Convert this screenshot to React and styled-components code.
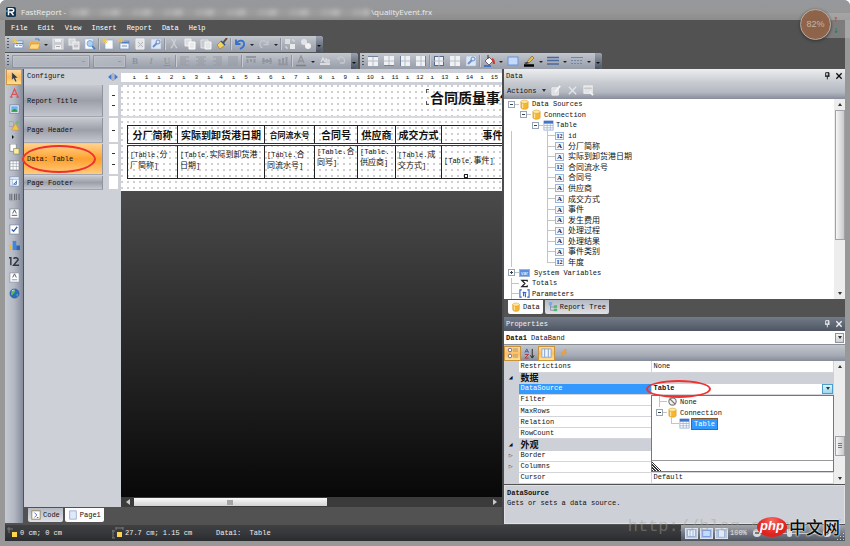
import React from "react"
import styled, { createGlobalStyle, css } from "styled-components"

const mono = `"Liberation Mono", "Noto Sans CJK SC", monospace`

const icons = {
  newReport: <><rect x="2" y="3" width="9" height="7" fill="#fff" stroke="#7f9ccb" /><path d="M2 5.500h9" stroke="#5d86c8" strokeWidth="1.500" /><path d="M4 7.500h2M7 7.500h3" stroke="#8fa9d6" /><path d="M0 3h6M3 0v6M1 1l4 4M5 1l-4 4" stroke="#f5c747" /></>,
  open: <><path d="M1 3h4l1 1h5v7H1z" fill="#eab24d" /><path d="M3 6h9l-2 5H1z" fill="#ffd985" stroke="#c28a2b" strokeWidth=".5" /><path d="M7 1h4v2" stroke="#4f80c8" fill="none" /></>,
  save: <><rect x="1" y="1" width="10" height="10" fill="#c9ccd1" stroke="#e5e7ea" /><path d="M3 1v3h6V1M3 11V7h6v4" fill="#f1f1f2" /><path d="M4 8.500h4" stroke="#aaa" /></>,
  saveAll: <><rect x="1" y="1" width="6" height="6" fill="#d3d5d9" stroke="#eee" /><rect x="5" y="4" width="6" height="7" fill="#d9dbdf" stroke="#f2f2f2" /><path d="M6 8h4" stroke="#aaa" /></>,
  preview: <><path d="M1 1h8v10H1z" fill="#fff" stroke="#9fb3cf" strokeWidth=".6" /><circle cx="6" cy="5.500" r="3" fill="#a9d2f5" stroke="#7aabdd" /><path d="M8 8l3 3" stroke="#3e78c0" strokeWidth="1.600" /></>,
  newPage: <><path d="M3 2h8v9H3z" fill="#fff" stroke="#8fa8cc" strokeWidth=".7" /><path d="M0 3h6M3 0v6M1 1l4 4M5 1l-4 4" stroke="#f5c747" /></>,
  dialog: <><rect x="2" y="3" width="9" height="8" fill="#eef3fb" stroke="#6d8fc4" strokeWidth=".7" /><path d="M2 4.500h9" stroke="#4d7cc5" strokeWidth="2" /><path d="M4 8h5" stroke="#79a" /><path d="M0 3h6M3 0v6" stroke="#f5c747" /></>,
  delPage: <><path d="M2 1h8v10H2z" fill="#e3e4e7" stroke="#f2f2f2" /><path d="M4 4l5 5M9 4L4 9" stroke="#b3b6bb" /></>,
  setup: <><path d="M1 1h10v10H1z" fill="#dfe7f4" stroke="#a9b8d2" strokeWidth=".6" /><path d="M3 9l4-4" stroke="#6d90c9" strokeWidth="2" /><circle cx="8" cy="4" r="2" fill="none" stroke="#6d90c9" /></>,
  cut: <path d="M4 1l4 8M8 1L4 9M3 9l1 1M8 9l1 1" stroke="#cfd2d6" fill="none" strokeWidth="1.200" />,
  copy: <><path d="M1 1h6v7H1z" fill="#dcdee1" stroke="#f0f0f0" /><path d="M5 4h6v7H5z" fill="#e9eaec" stroke="#fff" /></>,
  paste: <><path d="M1 2h7v8H1z" fill="#c6c9cd" stroke="#e2e3e5" /><path d="M5 4h6v7H5z" fill="#e4e5e8" stroke="#f8f8f8" /></>,
  brush: <><path d="M11 0L7 5" stroke="#5e4c38" strokeWidth="2" /><path d="M5 3l4 4-5 4-3-4z" fill="#f4d35b" stroke="#8b7430" strokeWidth=".6" /><path d="M5 3l4 4" stroke="#2f4f86" strokeWidth="1.500" /></>,
  undo: <path d="M2 1.500v4.500h4.500M2 6c3-5 9-4 8 1-.4 2-2 3-4 4" stroke="#3572cf" strokeWidth="1.800" fill="none" />,
  redo: <path d="M10 2v4.500H5.500M10 6C7 1 1 2 2 7c.4 1 1 2 2 3" stroke="#c3c6cc" strokeWidth="1.400" fill="none" />,
  group: <><rect x="1" y="1" width="5" height="5" fill="#dcdddf" /><rect x="6" y="6" width="5" height="5" fill="#e8e9ea" /><path d="M8 2h2v2M4 10H2V8" stroke="#ddd" fill="none" /></>,
  ungroup: <><circle cx="4" cy="4" r="3" fill="#e2e3e5" /><circle cx="8" cy="8" r="3" fill="#f2f2f2" /></>,
  alignL: <path d="M1 2h9M1 4h6M1 6h9M1 8h6M1 10h9" stroke="#969aa1" />,
  alignC: <path d="M1 2h10M3 4h6M1 6h10M3 8h6M1 10h10" stroke="#969aa1" />,
  alignR: <path d="M2 2h9M5 4h6M2 6h9M5 8h6M2 10h9" stroke="#969aa1" />,
  alignJ: <path d="M1 2h10M1 4h10M1 6h10M1 8h10M1 10h10" stroke="#969aa1" />,
  vTop: <path d="M1 2h10M2.500 4v4M6 4v3M9.500 4v4" stroke="#9397a0" strokeWidth="2" />,
  vMid: <path d="M1 6h10M2.500 3v6M6 4v4M9.500 3v6" stroke="#9397a0" strokeWidth="2" />,
  vBot: <path d="M1 9.500h10M2.500 4v5M6 3v6M9.500 2v7" stroke="#9397a0" strokeWidth="2" />,
  fontColor: <><path d="M3 8l3-7 3 7M4 6h4" stroke="#8f939a" fill="none" strokeWidth="1.300" /><path d="M1 10.500h10" stroke="#7c8087" strokeWidth="1.500" /></>,
  highlight: <><path d="M2 7l2-4 2 4M7 3v4h3V5H7" stroke="#dcdde0" fill="none" strokeWidth="1.400" /><path d="M1 9h10" stroke="#dcdde0" strokeWidth="2" /></>,
  rotate: <path d="M3 3c4-3 8 1 6 5M9 8H5M2 3l3 2" stroke="#c6c9ce" fill="none" strokeWidth="1.300" />,
  bTop: <><rect x="1" y="1" width="10" height="10" fill="#f0f1f4" /><path d="M6 1v10M1 6h10" stroke="#b9bec8" /><path d="M1 1.500h10" stroke="#74819a" /></>,
  bBot: <><rect x="1" y="1" width="10" height="10" fill="#f0f1f4" /><path d="M6 1v10M1 6h10" stroke="#b9bec8" /><path d="M1 10.500h10" stroke="#74819a" /></>,
  bLeft: <><rect x="1" y="1" width="10" height="10" fill="#f0f1f4" /><path d="M6 1v10M1 6h10" stroke="#b9bec8" /><path d="M1.500 1v10" stroke="#74819a" /></>,
  bRight: <><rect x="1" y="1" width="10" height="10" fill="#f0f1f4" /><path d="M6 1v10M1 6h10" stroke="#b9bec8" /><path d="M10.500 1v10" stroke="#74819a" /></>,
  bAll: <><rect x="1.500" y="1.500" width="9" height="9" fill="#f0f1f4" stroke="#566b90" /><path d="M6 1v10M1 6h10" stroke="#b9bec8" /></>,
  bNone: <><rect x="1" y="1" width="10" height="10" fill="#f0f1f4" /><path d="M6 1v10M1 6h10" stroke="#b9bec8" /></>,
  bucket: <><path d="M2 6l4-4 4 4-4 4z" fill="#fff" stroke="#445" strokeWidth=".8" /><path d="M5 0v4" stroke="#334" /><path d="M9 4c2 1 2 3 2 5" stroke="#cf3b2e" strokeWidth="2" fill="none" /><path d="M1 11h7" stroke="#2b62c2" strokeWidth="1.500" /></>,
  fill: <rect x="1" y="2" width="10" height="8" fill="#c3dafb" stroke="#6892dc" />,
  pencil: <><path d="M4 7l5-6 2 2-5 5z" fill="#e7c14b" stroke="#6d5625" strokeWidth=".6" /><path d="M1 8l3-1 2 1-3 1z" fill="#333" /><path d="M1 10.500h10" stroke="#000" strokeWidth="2.500" /></>,
  lineWidth: <path d="M0 2.500h12M0 5.500h12M0 9h12" stroke="#47699f" strokeWidth="1.600" />,
  lineStyle: <><path d="M0 2.500h12" stroke="#6d86b0" /><path d="M0 5.500h12M0 8.500h12" stroke="#6d86b0" strokeDasharray="2 1" /></>,
  arrow: <path d="M3 0v9l2-2 2 4 1.500-1L7 6.500h3z" fill="#3a3a3a" stroke="#fff" strokeWidth=".4" />,
  letterA: <path d="M2 10l4-9 4 9M3.500 7h5M1 10h3M8 10h3" stroke="#d9535b" fill="none" strokeWidth="1.200" />,
  picture: <><rect x="1" y="1" width="10" height="9" fill="#eef" stroke="#5f7690" strokeWidth=".7" /><rect x="2.500" y="2.500" width="7" height="6" fill="#6db0ee" /><path d="M2.500 8.500c2-4 5-4 7 0z" fill="#2f9c3d" /></>,
  shapes: <><rect x="0" y="2" width="5" height="5" fill="#bfc1c6" stroke="#888" strokeWidth=".5" /><circle cx="9" cy="3" r="2" fill="#79b579" /><path d="M7 4l4 7H3z" fill="#ffc23d" stroke="#ce8e20" strokeWidth=".5" /></>,
  subreport: <><path d="M1 0h7v8H1z" fill="#fff" stroke="#777e8a" strokeWidth=".8" /><path d="M5 5h6v6H5z" fill="#fcec9e" stroke="#8b8b62" strokeWidth=".8" /></>,
  grid: <><rect x="1" y="1" width="10" height="10" fill="#fff" stroke="#7b7f88" strokeWidth=".8" /><path d="M1 4h10M1 7h10M4.500 1v10M8 1v10" stroke="#9ba0aa" strokeWidth=".7" /></>,
  matrix: <><rect x="1" y="1" width="10" height="10" fill="#fff" stroke="#7f93b2" strokeWidth=".8" /><path d="M1 3.500h10M3.500 3v8" stroke="#8fb0de" /><path d="M5 9l3-3M8 5v4H5" stroke="#2e67b8" fill="none" /></>,
  barcode: <><path d="M1 2v7M3 2v7M6 2v7M8 2v7M11 2v7" stroke="#666a72" strokeWidth="1.200" /><path d="M1 9.500h10" stroke="#aaa" /></>,
  rich: <><rect x="1" y="1" width="10" height="10" fill="#fff" stroke="#7d8797" strokeWidth=".8" /><path d="M4 6l2-4 2 4M3 8h6" stroke="#444" fill="none" strokeWidth=".9" /></>,
  check: <><rect x="1" y="1" width="10" height="10" fill="#fff" stroke="#7c8493" strokeWidth=".8" /><path d="M3 6l2 2 4-5" stroke="#3560ad" fill="none" strokeWidth="1.500" /></>,
  chart: <><rect x="0" y="5" width="3" height="6" fill="#efb93c" /><rect x="4" y="1" width="4" height="10" fill="#3e86de" /><rect x="8" y="6" width="4" height="5" fill="#2d62b5" /></>,
  zip: <path d="M0 2h2v8M5 3c1-2 5-1 5 1L5 10h6" stroke="#33373e" strokeWidth="1.600" fill="none" />,
  cellText: <><rect x="1" y="1" width="10" height="10" fill="#fff" stroke="#8a92a0" strokeWidth=".8" /><path d="M4 6l2-4 2 4" stroke="#555" fill="none" /><path d="M3 8.500h6" stroke="#6c94cf" /></>,
  globe: <><circle cx="6" cy="6" r="5" fill="#2a6bc6" stroke="#2c4c82" strokeWidth=".6" /><path d="M3 3c3-2 5 0 3 2s-2 4-4 2zM8 7l2-1-1 4z" fill="#61bd55" /><path d="M3 3l3-1" stroke="#cfe5ff" /></>,
  edit: <><path d="M1 3h7v8H1z" fill="#dcdee2" stroke="#eceded" /><path d="M4 8l6-7" stroke="#f4f4f4" strokeWidth="2" /></>,
  close: <path d="M2 2l8 8M10 2l-8 8" stroke="#e3e4e7" strokeWidth="1.500" />,
  view: <><rect x="1" y="1" width="9" height="8" fill="#e2e3e6" stroke="#f5f5f5" /><path d="M1 3.500h9" stroke="#bbb" /><path d="M7 7l4 4" stroke="#f0f0f0" strokeWidth="2" /></>,
  db: <><path d="M2 3v6c0 3 8 3 8 0V3z" fill="#f7b62e" stroke="#cf8c14" strokeWidth=".5" /><ellipse cx="6" cy="3" rx="4" ry="1.800" fill="#ffe9a3" stroke="#cf8c14" strokeWidth=".5" /><path d="M4 5v5" stroke="#fff2c4" /></>,
  table: <><rect x="1" y="1" width="10" height="10" fill="#fff" stroke="#8aa3cc" strokeWidth=".8" /><path d="M1 2.500h10" stroke="#3e74cf" strokeWidth="3" /><path d="M1 6h10M1 8.500h10M4.500 3v8M8 3v8" stroke="#8fa6cb" strokeWidth=".7" /></>,
  none: <><circle cx="6" cy="6" r="4" fill="#f3f3f3" stroke="#777" strokeWidth="1.200" /><path d="M3 3l6 6" stroke="#777" strokeWidth="1.200" /></>,
  sum: <path d="M9 4V2.500H3L6.500 6 3 9.500h6V8" stroke="#222" fill="none" strokeWidth="1.300" />,
  params: <path d="M3 2H1v8h2M9 2h2v8H9M5 4v5M7 6v4M4 5h4" stroke="#2f66c0" fill="none" strokeWidth="1.200" />,
  tree: <><path d="M3 3v7h5M3 6h5" stroke="#88a" fill="none" /><rect x="1" y="0" width="4" height="4" fill="#79a9e8" /><rect x="7" y="4" width="4" height="3" fill="#54b46a" /><rect x="7" y="8" width="4" height="3" fill="#54b46a" /></>,
  categories: <><circle cx="3" cy="3" r="1.800" fill="#fff" stroke="#557" strokeWidth=".8" /><circle cx="3" cy="9" r="1.800" fill="#fff" stroke="#557" strokeWidth=".8" /><path d="M6 2h5M6 4h5M6 8h5M6 10h5" stroke="#b09468" /></>,
  sort: <><path d="M1 5l2-4 2 4M1.500 4h3" stroke="#2f62bd" fill="none" /><path d="M1 7h4l-4 4h4" stroke="#b13434" fill="none" /><path d="M9 1v9M7 8l2 3 2-3" stroke="#222" fill="none" /></>,
  columns: <><rect x="1" y="1" width="10" height="9" fill="#eef4ff" stroke="#7d97bd" strokeWidth=".8" /><path d="M4 1v9M8 1v9" stroke="#7f9bc8" /></>,
  bolt: <path d="M8 0L2 6h3l-3 6 8-7H7l3-5z" fill="#f6a63a" stroke="#d6802a" strokeWidth=".4" />,
  code: <><rect x="1" y="1" width="10" height="10" fill="#fff" stroke="#8f7a4e" /><path d="M4 3l3 3-3 3M7 9h2" stroke="#3b57c9" fill="none" /></>,
  page: <path d="M2 1h8v10H2z" fill="#dfe9f8" stroke="#93abd0" />,
  pos: <><path d="M2 0v6M0 2h6" stroke="#888" strokeWidth=".8" /><rect x="5" y="5" width="5" height="5" fill="#ffd34e" /></>,
  size: <><path d="M1 3v8M0 4h3M0 11h3M4 1h7M4 0v3M11 0v3" stroke="#888" strokeWidth=".8" /><rect x="5" y="5" width="5" height="5" fill="#ffd34e" /></>,
  pin: <path d="M4 1h5v5H4zM3 6.500h7M6.500 7v4M8 1v5" stroke="currentColor" fill="none" strokeWidth="1.300" />,
  x: <path d="M2 2l8 8M10 2l-8 8" stroke="currentColor" strokeWidth="2" />,
  minus: <path d="M3 6h6" stroke="#444" strokeWidth="2" />,
  plus: <path d="M3 6h6M6 3v6" stroke="#444" strokeWidth="2" />,
}

const Icon = ({ name, size = 12 }) => (
  <svg width={size} height={size} viewBox="0 0 12 12" fill="none" aria-hidden="true">{icons[name]}</svg>
)

// "|" is a separator, "v" a drop-down caret
const standardBar = ["newReport", "open", "v", "save", "saveAll", "preview", "|", "newPage", "dialog", "delPage", "setup", "|", "cut", "copy", "paste", "brush", "|", "undo", "v", "redo", "v", "|", "group", "ungroup"]
const textBar = ["|", "alignL", "alignC", "alignR", "alignJ", "|", "vTop", "vMid", "vBot", "|", "fontColor", "v", "highlight", "rotate"]
const borderBar = ["bTop", "bBot", "bLeft", "bRight", "|", "bAll", "bNone", "setup", "|", "bucket", "v", "fill", "pencil", "v", "lineWidth", "v", "lineStyle", "v"]
const objectBar = ["arrow", "letterA", "picture", "shapes", "v", "subreport", "grid", "matrix", "barcode", "rich", "check", "chart", "zip", "cellText", "globe"]

const bands = [
  { name: "Report Title", h: 33, marks: 2 },
  { name: "Page Header", h: 26, marks: 1 },
  { name: "Data: Table", h: 32, marks: 2, active: true },
  { name: "Page Footer", h: 15, marks: 0 },
]

const fields = [
  ["id", 1], ["分厂简称"], ["实际到卸货港日期"], ["合同流水号", 1], ["合同号"], ["供应商"], ["成交方式"],
  ["事件"], ["发生费用"], ["处理过程"], ["处理结果"], ["事件类别"], ["年度", 1],
]

const columns = [
  { w: 50, title: "分厂简称", lines: ["分", "厂简称"] },
  { w: 87, title: "实际到卸货港日期", lines: ["实际到卸货港", "日期"] },
  { w: 50, title: "合同流水号", small: true, lines: ["合", "同流水号"] },
  { w: 43, title: "合同号", lines: ["合", "同号"], top: true },
  { w: 38, title: "供应商", lines: ["", "供应商"], top: true },
  { w: 46, title: "成交方式", lines: ["成", "交方式"] },
  { w: 102, title: "事件", lines: ["事件"] },
]

const props = [
  { name: "Restrictions", value: "None" },
  { name: "数据", group: true },
  { name: "DataSource", value: "Table", active: true },
  { name: "Filter" },
  { name: "MaxRows" },
  { name: "Relation" },
  { name: "RowCount" },
  { name: "外观", group: true },
  { name: "Border", mark: "▷" },
  { name: "Columns", mark: "▷" },
  { name: "Cursor", value: "Default" },
]

const Tools = ({ items, vertical }) => items.map((it, i) => {
  if (it === "|") return <Sep key={i} />
  if (it === "v") return <Caret key={i} $side={vertical} aria-label="More" />
  return <ToolButton key={i} aria-label={it} $on={it === "arrow"} $tall={vertical}><Icon name={it} size={vertical ? 11 : 12} /></ToolButton>
})

const PanelHead = ({ title, dark }) => (
  <PanelTitle $dark={dark}>
    <span>{title}</span>
    <IconButton aria-label="Pin"><Icon name="pin" size={8} /></IconButton>
    <IconButton aria-label="Close"><Icon name="x" size={8} /></IconButton>
  </PanelTitle>
)

const Node = ({ depth, box, icon, label, badge, selected, last, root }) => (
  <TreeRow $depth={depth}>
    {box ? <Box $plus={box === "+"} /> : <Elbow $last={last} $root={root} />}
    <Dash />
    {icon && <Icon name={icon} size={11} />}
    {badge && <Badge $var={badge === "var"} $a={badge === "A"}>{badge}</Badge>}
    <NodeLabel $on={selected}>{label}</NodeLabel>
  </TreeRow>
)

export default function App() {
  return (
    <Frame>
      <GlobalStyle />
      <TitleBar>
        <Logo viewBox="0 0 12 12" aria-hidden="true">
          <rect width="12" height="12" rx="2" fill="#12334f" />
          <path d="M3 10V2h4c3 0 3 4 0 4H4M6 6l3 4" stroke="#fff" strokeWidth="1.800" fill="none" />
          <path d="M0 5h3" stroke="#3fa7e2" strokeWidth="1.500" />
        </Logo>
        <span>FastReport -</span>
        <Smudge />
        <span>\qualityEvent.frx</span>
      </TitleBar>
      <Window>
        <Menu>
          {["File", "Edit", "View", "Insert", "Report", "Data", "Help"].map(m => <MenuItem key={m}>{m}</MenuItem>)}
        </Menu>
        <BarRow>
          <Bar><Grip /><Tools items={standardBar} /><Cap /></Bar>
        </BarRow>
        <BarRow $second>
          <Bar>
            <Grip />
            <Combo $w={78} aria-label="Font" disabled />
            <Combo $w={33} aria-label="Size" disabled />
            <TextTool $bold>B</TextTool>
            <TextTool $italic>I</TextTool>
            <TextTool $under>U</TextTool>
            <Tools items={textBar} />
            <Cap />
          </Bar>
          <Bar><Grip /><Tools items={borderBar} /><Cap /></Bar>
        </BarRow>

        <Main>
          <ObjectBar><Tools items={objectBar} vertical /></ObjectBar>
          <Designer>
            <DesignRow>
              <BandPane>
                <Configure>
                  <ConfigureButton>Configure</ConfigureButton>
                  <svg width="10" height="8" viewBox="0 0 10 8" aria-hidden="true"><path d="M3.500 1v6L0 4zM6.500 1v6L10 4z" fill="#3b79d8" /><path d="M5 0v8" stroke="#999" /></svg>
                </Configure>
                {bands.map(b => (
                  <BandLine key={b.name} $h={b.h}>
                    <Band $on={b.active}>{b.name}{b.active && <Ring $band />}</Band>
                    <SideRuler>{Array.from({ length: b.marks }, (_, i) => <i key={i} />)}</SideRuler>
                  </BandLine>
                ))}
              </BandPane>
              <Canvas>
                <Ruler><Scale>
                  {Array.from({ length: 30 }, (_, i) => <span key={i}>{i % 2 ? (i + 1) / 2 : "ı"}</span>)}
                </Scale></Ruler>
                <Paper>
                  <TitleBand><ReportTitle>合同质量事件</ReportTitle></TitleBand>
                  <ReportTable>
                    <colgroup>{columns.map(c => <col key={c.title} width={c.w} />)}</colgroup>
                    <thead><tr>{columns.map(c => <HeadCell key={c.title} $small={c.small}>{c.title}</HeadCell>)}</tr></thead>
                    <tbody><tr>{columns.map(c => (
                      <DataCell key={c.title} $top={c.top}>
                        [Table.<Zh>{c.lines[0]}</Zh>{c.lines[1] && <><br /><Zh>{c.lines[1]}</Zh></>}]
                      </DataCell>
                    ))}</tr></tbody>
                  </ReportTable>
                  <Handle />
                </Paper>
                <Void />
                <HScroll><Tri $dir="left" $light /><HThumb /><Tri $dir="right" $light /></HScroll>
              </Canvas>
            </DesignRow>
            <Tabs>
              <Tab $gray><Icon name="code" size={10} />Code</Tab>
              <Tab><Icon name="page" size={10} />Page1</Tab>
            </Tabs>
          </Designer>

          <Side>
            <PanelHead title="Data" />
            <Actions>
              <ActionButton>Actions<Tri $dir="down" /></ActionButton>
              <IconButton aria-label="Edit"><Icon name="edit" size={11} /></IconButton>
              <IconButton aria-label="Delete"><Icon name="close" size={11} /></IconButton>
              <IconButton aria-label="View"><Icon name="view" size={11} /></IconButton>
            </Actions>
            <TreeWrap>
              <Tree>
                <Node depth={0} box="-" icon="db" label="Data Sources" />
                <Node depth={1} box="-" icon="db" label="Connection" />
                <Node depth={2} box="-" icon="table" label="Table" />
                {fields.map(([f, num], i) => (
                  <Node key={f} depth={3} badge={num ? "12" : "A"} last={i === fields.length - 1} label={f === "id" ? f : <Zh>{f}</Zh>} />
                ))}
                <Node depth={0} box="+" badge="var" label="System Variables" />
                <Node depth={0} icon="sum" label="Totals" root />
                <Node depth={0} icon="params" label="Parameters" root />
              </Tree>
              <VScroll><Tri $dir="up" /><VThumb $h={130} /><Rest /><Tri $dir="down" /></VScroll>
            </TreeWrap>
            <Tabs>
              <Tab><Icon name="db" size={10} />Data</Tab>
              <Tab $gray><Icon name="tree" size={10} />Report Tree</Tab>
            </Tabs>

            <PanelHead title="Properties" dark />
            <ObjectPick>
              <label htmlFor="object">Data1</label>
              <ObjectSelect id="object" defaultValue="DataBand"><option>DataBand</option></ObjectSelect>
              <DropMark><Tri $dir="down" /></DropMark>
            </ObjectPick>
            <PropBar>
              <PropButton $on aria-label="Categories"><Icon name="categories" /></PropButton>
              <PropButton aria-label="Sort"><Icon name="sort" size={11} /></PropButton>
              <PropButton $on aria-label="Properties"><Icon name="columns" size={11} /></PropButton>
              <PropButton aria-label="Events"><Icon name="bolt" size={8} /></PropButton>
            </PropBar>
            <PropWrap>
              <PropTable>
                <colgroup><col width="14" /><col width="133" /><col /></colgroup>
                <tbody>
                  {props.map(p => (
                    <PropRow key={p.name} $group={p.group} $on={p.active}>
                      <td>{p.group ? "◢" : p.mark}</td>
                      <td>{p.name}</td>
                      <td>{p.active
                        ? <ValueLine><span>{p.value}</span><Ring /><DropMark as="button" $blue aria-label="Open list"><Tri $dir="down" /></DropMark></ValueLine>
                        : p.value}</td>
                    </PropRow>
                  ))}
                </tbody>
              </PropTable>
              <VScroll><Tri $dir="up" /><Rest /><VThumb $h={20} $grip /><Small /><Tri $dir="down" /></VScroll>
              <Popup>
                <PopupTree>
                  <Node depth={0} icon="none" label="None" root />
                  <Node depth={0} box="-" icon="db" label="Connection" />
                  <Node depth={1} icon="table" label="Table" selected last />
                </PopupTree>
                <Hatch />
              </Popup>
            </PropWrap>
            <Hint><b>DataSource</b><p>Gets or sets a data source.</p></Hint>
          </Side>
        </Main>

        <Status>
          <Stat $w={105}><Icon name="pos" />0 cm; 0 cm</Stat>
          <Stat $w={104}><Icon name="size" />27.7 cm; 1.15 cm</Stat>
          <Stat>Data1:&nbsp; Table</Stat>
          <Zoom>
            <ZoomButton aria-label="Whole page"><Icon name="columns" size={9} /></ZoomButton>
            <ZoomButton aria-label="Page width"><Icon name="fill" size={9} /></ZoomButton>
            <ZoomButton aria-label="Actual size"><Icon name="page" size={9} /></ZoomButton>
            <span>100%</span>
            <Round aria-label="Zoom out"><Icon name="minus" size={8} /></Round>
            <Range type="range" aria-label="Zoom" defaultValue="50" />
            <Round aria-label="Zoom in"><Icon name="plus" size={8} /></Round>
            <Corner />
          </Zoom>
        </Status>
      </Window>

      <Watermark>http://blog.csdn.net/</Watermark>
      <Site><Php>php</Php><SiteName>中文网</SiteName></Site>
      <NetStrip><i>↑</i><b>↓</b></NetStrip>
      <Ball>82%</Ball>
    </Frame>
  )
}

const GlobalStyle = createGlobalStyle`
  * { box-sizing: border-box; }
  body { margin: 0; background: #fff; overflow: hidden; }
  button, select, input { font: inherit; color: inherit; margin: 0; padding: 0; border: 0; background: none; }
  svg { flex: none; display: block; }
  p { margin: 0; }
`

const Frame = styled.div`
  position: relative;
  display: flex;
  flex-direction: column;
  height: 100vh;
  padding: 0 5px 5px;
  border-radius: 6px 6px 0 0;
  background: #989898;
  font: 7px/10px ${mono};
  color: #111;
  overflow: hidden;
`

const TitleBar = styled.header`
  display: flex;
  align-items: center;
  height: 20px;
  margin: 0 -5px;
  padding: 4px 0 0 6px;
  background: linear-gradient(#96989c, #979797 60%, #8c8c8c);
  font: 8px/14px "Open Sans", sans-serif;
  color: #ececec;
  flex: none;
`

const Logo = styled.svg`
  width: 10px;
  height: 10px;
  margin-right: 5px;
`

const Smudge = styled.div`
  width: 300px;
  height: 7px;
  margin: 0 1px 0 4px;
  background: repeating-linear-gradient(100deg, #a8a8a8 0 9px, #b5b5b5 12px 17px, #9c9c9c 20px 31px);
  filter: blur(2px);
`

const Window = styled.div`
  display: flex;
  flex-direction: column;
  flex: 1;
  min-height: 0;
  background: #525252;
`

const Menu = styled.nav`
  display: flex;
  gap: 10px;
  height: 16px;
  padding-left: 6px;
  flex: none;
`

const MenuItem = styled.button`
  color: #fff;
`

const BarRow = styled.div`
  display: flex;
  gap: 2px;
  height: 16px;
  flex: none;
  ${p => p.$second && css`height: 17px; padding-top: 1px;`}
`

const Bar = styled.div`
  display: flex;
  align-items: center;
  height: 16px;
  background: linear-gradient(#c3c7ce, #a9aeb8 55%, #989eaa);
  border-radius: 0 3px 3px 0;
`

const Grip = styled.div`
  width: 2px;
  height: 12px;
  margin: 0 1px 0 2px;
  background: repeating-linear-gradient(#50545c 0 1px, transparent 1px 3px);
`

const Cap = styled.div`
  width: 7px;
  height: 16px;
  margin-left: 2px;
  background: linear-gradient(#9aa1af, #4b5260);
  border-radius: 0 3px 3px 0;
  &::after {
    content: "";
    display: block;
    width: 0;
    margin: 9px 1px 0;
    border: 2px solid transparent;
    border-top-color: #111;
  }
`

const ToolButton = styled.button`
  display: flex;
  align-items: center;
  justify-content: center;
  width: 16px;
  height: 14px;
  ${p => p.$tall && css`height: 16px;`}
  ${p => p.$on && css`
    border: 1px solid #c9974e;
    background: linear-gradient(#fbdca5, #ffb95a 50%, #ffe08f);
  `}
`

const Caret = styled.button`
  width: 8px;
  height: 10px;
  &::after {
    content: "";
    display: block;
    width: 0;
    margin: 4px auto 0;
    border: 2px solid transparent;
    border-top-color: #222;
  }
  ${p => p.$side && css`
    height: 8px;
    &::after { margin-top: 0; border-color: transparent transparent transparent #111; }
  `}
`

const Sep = styled.div`
  width: 2px;
  height: 12px;
  border-left: 1px solid #8f95a0;
  background: #c9ccd3;
`

const Combo = styled.select`
  appearance: none;
  width: ${p => p.$w}px;
  height: 13px;
  margin: 0 1px 0 2px;
  border: 1px solid #868c97;
  background:
    linear-gradient(#8b9099, #8b9099) right 4px center / 3px 1px no-repeat,
    linear-gradient(90deg, #b9bdc4, #b3b7bf);
  box-shadow: inset 0 0 0 1px #c3c6cc;
`

const TextTool = styled.button`
  width: 16px;
  text-align: center;
  font: 9px/12px "Liberation Serif", serif;
  color: #8d9198;
  font-weight: ${p => (p.$bold ? 700 : 400)};
  font-style: ${p => (p.$italic ? "italic" : "normal")};
  text-decoration: ${p => (p.$under ? "underline" : "none")};
`

const Main = styled.main`
  display: flex;
  flex: 1;
  min-height: 0;
`

const ObjectBar = styled.aside`
  display: flex;
  flex-direction: column;
  align-items: center;
  width: 18px;
  margin-bottom: 2px;
  background: linear-gradient(90deg, #c5c9d2, #b3b8c3 50%, #848b9a);
  flex: none;
`

const Designer = styled.section`
  display: flex;
  flex-direction: column;
  flex: 1;
  min-width: 0;
  padding-left: 1px;
`

const DesignRow = styled.div`
  display: flex;
  flex: 1;
  min-height: 0;
`

const BandPane = styled.div`
  width: 97px;
  background: #cdd0d7;
  flex: none;
`

const Configure = styled.div`
  display: flex;
  justify-content: space-between;
  align-items: center;
  height: 16px;
  padding: 0 3px;
`

const ConfigureButton = styled.button`
  height: 14px;
  align-self: flex-start;
`

const BandLine = styled.div`
  display: flex;
  height: ${p => p.$h}px;
  padding-bottom: 1px;
  gap: 6px;
`

const Band = styled.div`
  position: relative;
  display: flex;
  align-items: center;
  width: 79px;
  padding-left: 3px;
  border-right: 1px solid #8f939b;
  border-bottom: 1px solid #a2a5ad;
  background: ${p => (p.$on
    ? "linear-gradient(#ffd18b, #ffb04b 35%, #ff9f2d 50%, #ffcd80)"
    : "linear-gradient(#c6c9cf, #a9acb4 35%, #9c9fa8 50%, #c3c6ce)")};
`

const Ring = styled.span`
  position: absolute;
  z-index: 4;
  inset: -4px auto auto -8px;
  width: 65px;
  height: 18px;
  border: 2px solid #f0302c;
  border-radius: 50%;
  pointer-events: none;
  ${p => p.$band && css`inset: 1px auto auto -2px; width: 74px; height: 28px;`}
`

const SideRuler = styled.div`
  display: flex;
  flex-direction: column;
  align-items: center;
  justify-content: space-evenly;
  width: 9px;
  margin-bottom: 1px;
  background: #fff;
  i { width: 3px; height: 1px; background: #333; }
`

const Canvas = styled.div`
  display: flex;
  flex-direction: column;
  flex: 1;
  min-width: 0;
  overflow: hidden;
`

const Ruler = styled.div`
  padding: 4px 0;
  height: 16px;
  background: #cdd0d7;
  flex: none;
`

const Scale = styled.div`
  display: flex;
  height: 9px;
  padding-left: 7px;
  background: #fff;
  line-height: 9px;
  font-size: 6px;
  span { flex: 0 0 calc(373px / 30); text-align: center; }
`

const Paper = styled.div`
  position: relative;
  height: 106px;
  background: #fff radial-gradient(circle at 1px 1px, #cfcfcf 0 1px, transparent 1px) 0 0 / 6px 6px;
  overflow: hidden;
  flex: none;
`

const TitleBand = styled.div`
  height: 33px;
  margin-bottom: 7px;
  padding: 4px 0 0 305px;
  border-bottom: 2px solid #d8dadf;
`

const ReportTitle = styled.h1`
  width: 120px;
  height: 16px;
  margin: 0;
  padding-left: 4px;
  font: 700 14px/16px "Noto Sans CJK SC", sans-serif;
  white-space: nowrap;
  background:
    linear-gradient(#555, #555) 0 0 / 3px 1px no-repeat,
    linear-gradient(#555, #555) 0 0 / 1px 4px no-repeat,
    linear-gradient(#555, #555) 0 100% / 3px 1px no-repeat,
    linear-gradient(#555, #555) 0 100% / 1px 4px no-repeat;
`

const ReportTable = styled.table`
  width: 416px;
  margin-left: 6px;
  table-layout: fixed;
  border-collapse: collapse;
`

const HeadCell = styled.th`
  height: 19px;
  padding: 0;
  border: 1px solid #222;
  border-bottom: 3px double #333;
  font: 700 ${p => (p.$small ? 8 : 10)}px/12px "Noto Sans CJK SC", sans-serif;
  white-space: nowrap;
`

const DataCell = styled.td`
  height: 30px;
  padding: 0 0 ${p => (p.$top ? 10 : 4)}px 2px;
  border: 1px solid #222;
  font-size: 7px;
  line-height: 9px;
  white-space: nowrap;
  vertical-align: middle;
`

const Zh = styled.span`
  font: 8px/9px "Noto Sans CJK SC", sans-serif;
`

const Handle = styled.i`
  position: absolute;
  left: 343px;
  top: 89px;
  width: 4px;
  height: 4px;
  border: 1px solid #222;
  background: #fff;
`

const Void = styled.div`
  flex: 1;
  background: linear-gradient(#4a4a4a, #2c2c2c 45%, #080808);
`

const HScroll = styled.div`
  display: flex;
  align-items: center;
  height: 10px;
  padding: 0 5px;
  background: #3b3b3b;
  gap: 4px;
`

const HThumb = styled.div`
  flex: 0 0 52%;
  height: 8px;
  margin-right: auto;
  background:
    linear-gradient(#a5a5a5, #a5a5a5) center / 6px 5px no-repeat,
    linear-gradient(#fafafa, #d2d2d4);
`

const triColor = p => (p.$light ? "#c9c9c9" : "#333")
const Tri = styled.i`
  width: 0;
  height: 0;
  flex: none;
  border: 3px solid transparent;
  ${p => p.$dir === "left" && css`border-width: 3px 4px 3px 0; border-right-color: ${triColor};`}
  ${p => p.$dir === "right" && css`border-width: 3px 0 3px 4px; border-left-color: ${triColor};`}
  ${p => p.$dir === "up" && css`border-width: 0 2px 3px; border-bottom-color: ${triColor};`}
  ${p => p.$dir === "down" && css`border-width: 3px 2px 0; border-top-color: ${triColor};`}
`

const Tabs = styled.div`
  display: flex;
  gap: 2px;
  height: 18px;
  padding: 1px 4px 3px;
  background: #525252;
  flex: none;
`

const Tab = styled.button`
  display: flex;
  align-items: center;
  gap: 2px;
  padding: 0 3px;
  border-radius: 0 0 2px 2px;
  background: ${p => (p.$gray ? "linear-gradient(#b4b9c3, #dfe1e5)" : "#fdfdfd")};
`

const Side = styled.aside`
  display: flex;
  flex-direction: column;
  flex: 0 0 343px;
  border-left: 2px solid #4a4c50;
  background: #525252;
`

const PanelTitle = styled.div`
  display: flex;
  align-items: center;
  gap: 4px;
  height: 13px;
  padding: 0 2px;
  background: linear-gradient(#eceef0, #c9ccd2);
  flex: none;
  span { flex: 1; }
  ${p => p.$dark && css`
    height: 14px;
    background: linear-gradient(#727b89, #4f5662);
    color: #f2f2f2;
  `}
`

const IconButton = styled.button`
  display: flex;
  justify-content: center;
  min-width: 8px;
`

const Actions = styled.div`
  display: flex;
  align-items: center;
  gap: 5px;
  height: 17px;
  padding: 0 3px;
  background: linear-gradient(#c9ccd2, #b4b8c1 60%, #868c9a);
  flex: none;
`

const ActionButton = styled.button`
  display: flex;
  align-items: center;
  gap: 6px;
`

const TreeWrap = styled.div`
  display: flex;
  height: 200px;
  background: #fff;
  flex: none;
`

const Tree = styled.div`
  display: grid;
  grid-auto-rows: 1fr;
  flex: 1;
`

const TreeRow = styled.div`
  display: flex;
  align-items: center;
  min-height: 0;
  padding-left: 4px;
  background: ${p => (p.$depth === 3 ? "linear-gradient(#c4c4c4, #c4c4c4) 7px 0 / 1px 100% no-repeat" : "none")};
  &::before { content: ""; width: ${p => p.$depth * 12}px; }
`

const Box = styled.span`
  width: 7px;
  height: 7px;
  border: 1px solid #98a3b5;
  background:
    linear-gradient(#345, #345) center / 3px 1px no-repeat
    ${p => p.$plus && ", linear-gradient(#345, #345) center / 1px 3px no-repeat"};
`

const Elbow = styled.span`
  align-self: stretch;
  width: 4px;
  margin-left: 3px;
  background:
    linear-gradient(#c4c4c4, #c4c4c4) 0 0 / 1px ${p => (p.$last ? "50%" : "100%")} no-repeat,
    linear-gradient(#c4c4c4, #c4c4c4) 0 50% / 4px 1px no-repeat;
`

const Dash = styled.span`
  width: 4px;
  height: 1px;
  background: #c4c4c4;
`

const Badge = styled.span`
  width: 9px;
  height: 8px;
  border: 1px solid #9ab6de;
  background: #f3f8ff;
  font: 700 6px/6px "Liberation Serif", serif;
  text-align: center;
  color: #223;
  ${p => p.$a && css`font-size: 7px;`}
  ${p => p.$var && css`width: 11px; background: #5b8fdd; color: #fff; font: 5px/6px "Liberation Sans", sans-serif;`}
`

const NodeLabel = styled.span`
  margin-left: 2px;
  white-space: nowrap;
  ${Badge} + & { margin-left: 4px; }
  ${p => p.$on && css`
    padding: 0 2px;
    outline: 1px solid #8a5a2a;
    background: #3399ff;
    color: #fff;
  `}
`

const VScroll = styled.div`
  display: flex;
  flex-direction: column;
  align-items: center;
  width: 11px;
  padding: 4px 0;
  gap: 4px;
  background: #ededee;
`

const VThumb = styled.div`
  width: 10px;
  height: ${p => p.$h}px;
  border: 1px solid #a2a2a4;
  background: linear-gradient(90deg, #f6f6f6, #c8c9cc);
  ${p => p.$grip && css`
    padding: 6px 2px;
    &::after { content: ""; display: block; height: 6px; background: repeating-linear-gradient(#777 0 1px, transparent 1px 2px); }
  `}
`

const Rest = styled.div`
  flex: 1;
`

const Small = styled.div`
  height: 13px;
`

const ObjectPick = styled.div`
  display: flex;
  align-items: center;
  gap: 4px;
  height: 13px;
  padding: 0 1px 0 2px;
  background: #fff;
  flex: none;
  label { font-weight: 700; }
`

const ObjectSelect = styled.select`
  appearance: none;
  flex: 1;
`

const DropMark = styled.span`
  display: grid;
  place-items: center;
  width: 9px;
  height: 10px;
  border: 1px solid #8f939b;
  background: linear-gradient(#f5f5f5, #cfd1d6);
  ${p => p.$blue && css`width: 11px; border-color: #4d9fc9; background: linear-gradient(#dff3fc, #9bd7f2);`}
`

const PropBar = styled.div`
  display: flex;
  align-items: center;
  height: 17px;
  border-top: 1px solid #8a8e96;
  background: linear-gradient(#c3c6cd, #a5aab4 65%, #858b99);
  flex: none;
`

const PropButton = styled.button`
  display: flex;
  align-items: center;
  justify-content: center;
  width: 17px;
  height: 15px;
  ${p => p.$on && css`
    border: 1px solid #c9923c;
    background: linear-gradient(#fbdca5, #ffbf62 50%, #ffe39a);
  `}
`

const PropWrap = styled.div`
  position: relative;
  display: flex;
  height: 123px;
  background: #fff;
  flex: none;
`

const PropTable = styled.table`
  flex: 1;
  height: 123px;
  table-layout: fixed;
  border-collapse: collapse;
  line-height: 9px;
  td {
    height: 11px;
    padding: 0 0 0 2px;
    border-bottom: 1px solid #d3d5da;
    border-right: 1px solid #d3d5da;
  }
  td:first-child {
    padding: 0;
    background: #cdd0d7;
    border-color: #cdd0d7;
    text-align: center;
    font: 5px/9px "DejaVu Sans", sans-serif;
  }
`

const PropRow = styled.tr`
  ${p => p.$group && css`
    background: #cdd0d7;
    td { border-color: #cdd0d7; }
    td:nth-child(2) { font: 700 9px/9px "Noto Sans CJK SC", sans-serif; }
  `}
  ${p => p.$on && css`
    td:nth-child(2) { background: #3399ff; color: #fff; }
    td:nth-child(3) { font-weight: 700; }
  `}
`

const ValueLine = styled.div`
  position: relative;
  display: flex;
  justify-content: space-between;
  align-items: center;
  height: 10px;
`

const Popup = styled.div`
  position: absolute;
  left: 147px;
  right: 11px;
  top: 34px;
  height: 77px;
  border: 1px solid #777;
  background: #fff;
`

const PopupTree = styled.div`
  display: grid;
  grid-auto-rows: 11px;
  height: 65px;
  border-bottom: 1px solid #999;
`

const Hatch = styled.div`
  width: 11px;
  height: 10px;
  background: repeating-linear-gradient(45deg, #333 0 1px, #fff 1px 2px);
  clip-path: polygon(0 0, 100% 100%, 0 100%);
`

const Hint = styled.div`
  flex: 1;
  margin: 1px 0;
  padding: 2px;
  border: 1px solid #dfe1e5;
  background: #cdd0d7;
`

const Status = styled.footer`
  display: flex;
  align-items: center;
  height: 16px;
  padding-left: 2px;
  background: linear-gradient(#3f4042, #37383b 50%, #292b2e);
  color: #eee;
  flex: none;
`

const Stat = styled.span`
  display: flex;
  align-items: center;
  gap: 1px;
  width: ${p => (p.$w ? p.$w + "px" : "auto")};
`

const Zoom = styled.div`
  display: flex;
  align-items: center;
  gap: 2px;
  width: 164px;
  height: 16px;
  margin-left: auto;
  padding-left: 4px;
  background: linear-gradient(#a3a7af, #747b87 50%, #4e545e);
`

const ZoomButton = styled.button`
  display: grid;
  place-items: center;
  width: 13px;
  height: 11px;
  border: 1px solid #dde3ee;
  background: #b8c4d8;
`

const Round = styled.button`
  width: 8px;
  height: 8px;
  margin-left: 4px;
  border-radius: 50%;
  background: #d8dade;
`

const Range = styled.input`
  appearance: none;
  width: 54px;
  height: 8px;
  background: linear-gradient(#c5c9d0, #c5c9d0) center / 100% 1px no-repeat;
  &::-webkit-slider-thumb {
    appearance: none;
    width: 5px;
    height: 8px;
    border-radius: 0 0 3px 3px;
    background: #d8dade;
  }
`

const Corner = styled.i`
  width: 8px;
  height: 8px;
  margin: auto 1px 1px auto;
  background: radial-gradient(circle, #d0d3d9 1px, transparent 1px) 0 0 / 3px 3px;
  clip-path: polygon(100% 0, 100% 100%, 0 100%);
`

const Watermark = styled.div`
  position: absolute;
  right: 8px;
  bottom: 8px;
  font: 17px/22px "Liberation Mono", monospace;
  color: rgba(160, 160, 145, 0.45);
`

const Site = styled.div`
  position: absolute;
  right: 10px;
  bottom: 9px;
  display: flex;
  align-items: center;
  gap: 2px;
`

const Php = styled.b`
  width: 30px;
  height: 20px;
  border-radius: 50%;
  background: radial-gradient(circle at 50% 20%, #f56a62, #e0231f 60%);
  font: italic 700 13px/17px "Liberation Sans", sans-serif;
  text-align: center;
  color: #fff;
`

const SiteName = styled.span`
  font: 500 17px/20px "Noto Sans CJK SC", sans-serif;
  color: #0c0c0c;
  text-shadow: 0 0 1px #fff, 0 0 2px #ddd, 0 0 2px #ddd;
`

const NetStrip = styled.div`
  position: absolute;
  right: 0;
  top: 13px;
  display: grid;
  align-content: space-evenly;
  width: 26px;
  height: 25px;
  padding-left: 9px;
  background: rgba(190, 190, 190, 0.4);
  font: 700 7px/8px "DejaVu Sans", sans-serif;
  i { color: #b0544a; font-style: normal; }
  b { color: #2f7d48; }
`

const Ball = styled.div`
  position: absolute;
  right: 19px;
  top: 9px;
  width: 31px;
  height: 31px;
  border: 1px solid #b7a79d;
  border-radius: 50%;
  background: radial-gradient(circle, #8a6248, #92654a);
  box-shadow: 0 1px 3px #333;
  font: 9px/28px "Liberation Sans", sans-serif;
  text-align: center;
  color: #c4b5ab;
`
